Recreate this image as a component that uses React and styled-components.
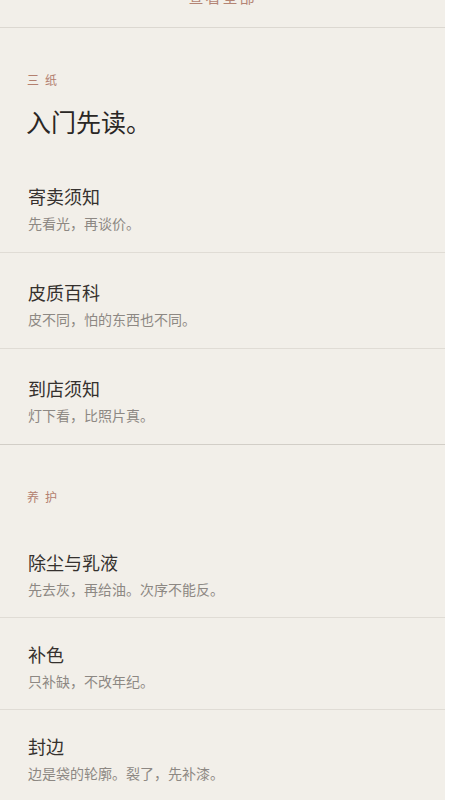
import React from 'react';
import styled, { createGlobalStyle } from 'styled-components';

const GlobalStyle = createGlobalStyle`
  html, body {
    margin: 0;
    padding: 0;
    background: #ffffff;
  }
  body {
    font-family: "Noto Sans CJK SC", "Noto Sans", sans-serif;
    -webkit-font-smoothing: antialiased;
  }
`;

const sections = [
  {
    id: 'intro',
    label: '三纸',
    heading: '入门先读。',
    items: [
      { title: '寄卖须知', sub: '先看光，再谈价。' },
      { title: '皮质百科', sub: '皮不同，怕的东西也不同。' },
      { title: '到店须知', sub: '灯下看，比照片真。' },
    ],
  },
  {
    id: 'care',
    label: '养护',
    compact: true,
    items: [
      { title: '除尘与乳液', sub: '先去灰，再给油。次序不能反。' },
      { title: '补色', sub: '只补缺，不改年纪。' },
      { title: '封边', sub: '边是袋的轮廓。裂了，先补漆。' },
    ],
  },
];

export default function App() {
  return (
    <>
      <GlobalStyle />
      <Page>
        <TopBar>
          <MoreLink href='#'>查看全部</MoreLink>
        </TopBar>

        {sections.map((s) => (
          <Section key={s.id}>
            <Label>{s.label}</Label>
            {s.heading && <Heading>{s.heading}</Heading>}
            <List>
              {s.items.map((it) => (
                <Item key={it.title} $compact={s.compact}>
                  <Title>{it.title}</Title>
                  <Sub>{it.sub}</Sub>
                </Item>
              ))}
            </List>
          </Section>
        ))}
      </Page>
    </>
  );
}

const Page = styled.main`
  width: 445px;
  min-height: 800px;
  background: #f2efe9;
  overflow: hidden;
`;

const TopBar = styled.div`
  height: 27px;
  display: flex;
  justify-content: center;
  border-bottom: 1px solid #dcd8d1;
`;

const MoreLink = styled.a`
  margin-top: -11px;
  font-size: 15px;
  line-height: 15px;
  letter-spacing: 2px;
  color: #b48474;
  text-decoration: none;
`;

const Section = styled.section`
  padding-top: 43px;
  border-bottom: 1px solid #d2cec7;
`;

const Label = styled.div`
  padding-left: 27px;
  font-size: 12px;
  line-height: 18px;
  letter-spacing: 6px;
  color: #b3806f;
`;

const Heading = styled.h2`
  margin: 16px 0 0;
  padding-left: 26px;
  font-size: 25px;
  line-height: 32px;
  font-weight: 400;
  color: #2a2725;
`;

const List = styled.div`
  margin-top: 20px;
  display: flex;
  flex-direction: column;
`;

const Item = styled.a`
  display: flex;
  flex-direction: column;
  gap: 4px;
  padding: ${(p) => (p.$compact ? '23px 28px 18px' : '26px 28px 19px')};
  text-decoration: none;

  & + & {
    border-top: 1px solid #e0dcd5;
  }
`;

const Title = styled.div`
  font-size: 18px;
  line-height: 26px;
  color: #35312e;
`;

const Sub = styled.div`
  font-size: 14px;
  line-height: 20px;
  color: #8d8883;
`;
